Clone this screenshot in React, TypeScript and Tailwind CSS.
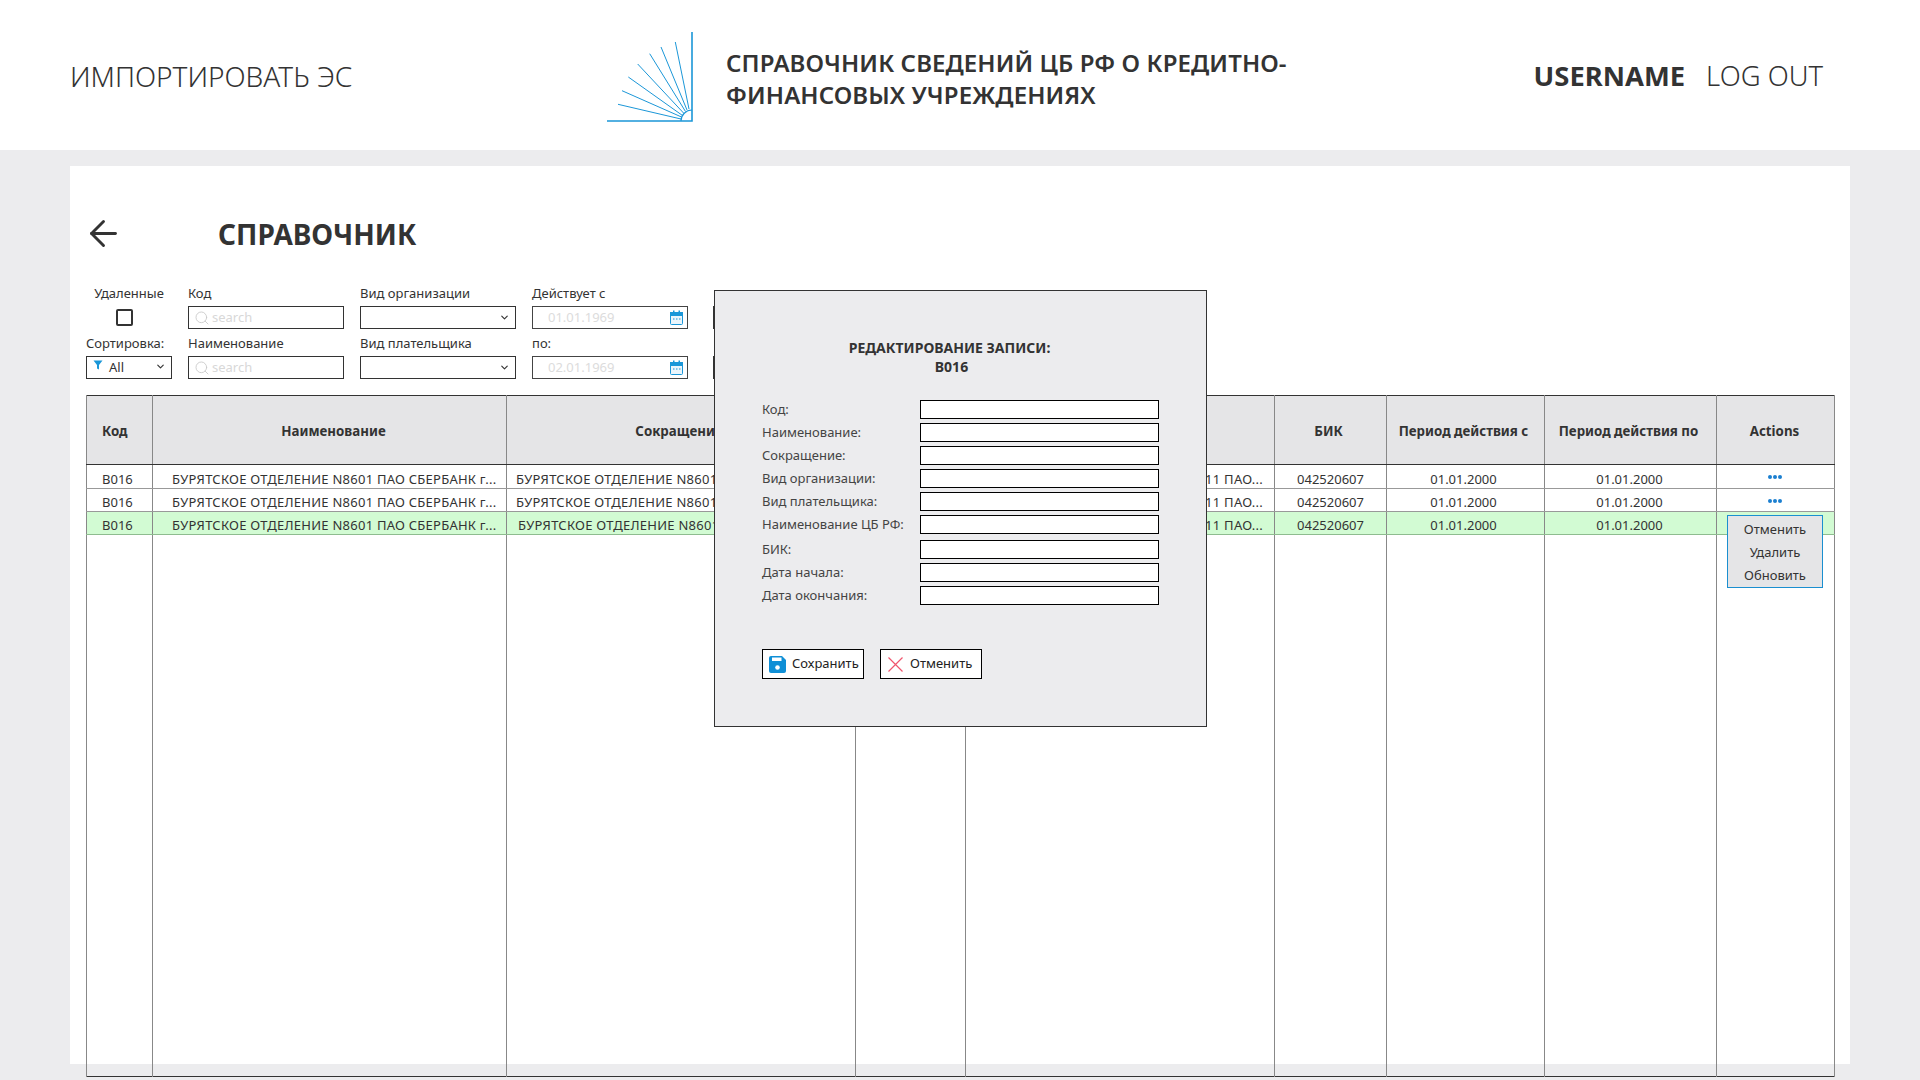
import React from "react";
import { Search, ChevronDown, ArrowLeft } from "lucide-react";

const widths = [66, 354, 349, 110, 309, 112, 158, 172, 118];
const headers = ["Код", "Наименование", "Сокращение", "Вид", "Наименование ЦБ РФ", "БИК", "Период действия с", "Период действия по", "Actions"];
const NAME = "БУРЯТСКОЕ ОТДЕЛЕНИЕ N8601 ПАО СБЕРБАНК г...";
const SHORT = "БУРЯТСКОЕ ОТДЕЛЕНИЕ N8611 ПАО...";
const formFields = ["Код:", "Наименование:", "Сокращение:", "Вид организации:", "Вид плательщика:", "Наименование ЦБ РФ:", "БИК:", "Дата начала:", "Дата окончания:"];

function Logo() {
  const rays = [
    [618, 104.3, 681, 119],
    [622, 90.7, 681.5, 117],
    [628.3, 77, 682.5, 115.5],
    [637.7, 64, 684, 113.5],
    [649.7, 53.7, 685.5, 111.5],
    [661, 47, 687, 110],
    [675.3, 42, 689, 109],
  ];
  return (
    <svg width="88" height="94" viewBox="606 30 88 94" className="shrink-0 mt-[4px]">
      {rays.map((r, i) => (
        <line key={i} x1={r[0]} y1={r[1]} x2={r[2]} y2={r[3]} stroke="#1b97d8" strokeWidth="1" />
      ))}
      <path d="M681 121a11 11 0 0 1 11-11" fill="none" stroke="#1b97d8" strokeWidth="1.2" />
      <path d="M607 121H692V32" fill="none" stroke="#1b97d8" strokeWidth="1.6" />
    </svg>
  );
}

function Calendar() {
  return (
    <svg width="13" height="15" viewBox="0 0 13 15" className="mr-[-1px]">
      <rect x="0.5" y="2.5" width="12" height="12" rx="1" fill="#eaf5fb" stroke="#1b97d8" />
      <rect x="0" y="2" width="13" height="4" fill="#1b97d8" />
      <rect x="3" y="0.5" width="1.5" height="2" fill="#1b97d8" />
      <rect x="8.5" y="0.5" width="1.5" height="2" fill="#1b97d8" />
      <path d="M3 9h1.5M6 9h1.5M9 9h1.5" stroke="#1b97d8" />
    </svg>
  );
}

function Label({ children, className = "" }: { children: React.ReactNode; className?: string }) {
  return <div className={`h-[18px] text-[13px] leading-[16px] text-[#333] whitespace-nowrap ${className}`}>{children}</div>;
}

function SearchField({ label }: { label: string }) {
  return (
    <div className="w-[156px]">
      <Label>{label}</Label>
      <div className="mt-[3px] h-[23px] border border-[#333] bg-white flex items-center pl-[5px] gap-[2px]">
        <Search size={16} strokeWidth={1.3} className="text-[#c8c8c8]" />
        <span className="text-[13px] text-[#d8d8d8]">search</span>
      </div>
    </div>
  );
}

function SelectField({ label }: { label: string }) {
  return (
    <div className="w-[156px]">
      <Label>{label}</Label>
      <div className="mt-[3px] h-[23px] border border-[#333] bg-white flex items-center justify-end pr-[5px]">
        <ChevronDown size={11} strokeWidth={2.5} className="text-[#333]" />
      </div>
    </div>
  );
}

function DateField({ label, value }: { label: string; value: string }) {
  return (
    <div className="w-[156px]">
      <Label>{label}</Label>
      <div className="mt-[3px] h-[23px] border border-[#444] bg-white flex items-center justify-between pl-[15px] pr-[5px]">
        <span className="text-[13px] text-[#dcdcdc]">{value}</span>
        <Calendar />
      </div>
    </div>
  );
}

function Row({ selected, dots, first }: { selected?: boolean; dots?: boolean; first?: boolean }) {
  const border = selected ? "border-y-[#8ebc8f]" : "border-y-[#999]";
  const cell = `border-x border-x-[#888] border-y ${border} p-0 ${first ? "pt-[4px]" : "pt-[3px]"} text-[13px] leading-[18px] text-[#333] whitespace-nowrap overflow-hidden`;
  const rowHeight = first ? "h-[24px]" : "h-[23px]";
  return (
    <tr className={selected ? `${rowHeight} bg-[#d2fbd3]` : rowHeight}>
      <td className={`${cell} pl-[15px]`}>В016</td>
      <td className={`${cell} pl-[19px] tracking-[0.25px]`}>{NAME}</td>
      <td className={`${cell} tracking-[0.25px] ${selected ? "pl-[11px]" : "pl-[9px]"}`}>{NAME}</td>
      <td className={cell} />
      <td className={`${cell} tracking-[0.25px] text-right pr-[11px]`}>{SHORT}</td>
      <td className={`${cell} text-center`}>042520607</td>
      <td className={`${cell} text-center pr-[4px]`}>01.01.2000</td>
      <td className={`${cell} text-center pr-[2px]`}>01.01.2000</td>
      <td className={`${cell} text-center`}>
        {dots && (
          <div className={`flex justify-center gap-[1px] pr-[2px] ${first ? "-mt-[3px]" : "-mt-[2px]"}`}>
            <span className="size-[4px] rounded-full bg-[#1b7fd0]" />
            <span className="size-[4px] rounded-full bg-[#1b7fd0]" />
            <span className="size-[4px] rounded-full bg-[#1b7fd0]" />
          </div>
        )}
      </td>
    </tr>
  );
}

export default function App() {
  return (
    <div
      className="relative h-[1080px] w-[1920px] overflow-hidden bg-[#ececee]"
      style={{ fontFamily: '"Noto Sans", sans-serif' }}
    >
      <header className="h-[150px] bg-white flex items-center pl-[70px] pr-[97px] text-[#333]">
        <div className="w-[537px] mt-[2px] text-[28px] font-light whitespace-nowrap">ИМПОРТИРОВАТЬ ЭС</div>
        <Logo />
        <div className="ml-[32px] mt-[7px] w-[809px] text-[24px] leading-[32px] font-semibold tracking-[0.1px]">
          СПРАВОЧНИК СВЕДЕНИЙ ЦБ РФ О КРЕДИТНО-
          <br />
          ФИНАНСОВЫХ УЧРЕЖДЕНИЯХ
        </div>
        <div className="mt-[2px] text-[27.4px] font-bold">USERNAME</div>
        <div className="ml-[21px] mt-[2px] text-[27.4px] font-light whitespace-nowrap">LOG OUT</div>
      </header>

      <main className="mt-[16px] ml-[70px] w-[1780px] h-[898px] bg-white pl-[16px] pr-[16px]">
        <div className="flex items-center pt-[21px] h-[113px]">
          <ArrowLeft size={41} strokeWidth={1.7} className="text-[#333] shrink-0 ml-[-3px]" />
          <h1 className="ml-[94px] mt-[2px] text-[28px] font-bold text-[#333]">СПРАВОЧНИК</h1>
        </div>

        <div className="flex mt-[6px] gap-[16px]">
          <div className="w-[86px]">
            <Label className="text-center">Удаленные</Label>
            <div className="h-[26px] flex items-center justify-center">
              <div className="size-[17px] rounded-[2px] border-2 border-[#333] mt-[3px] mr-[9px]" />
            </div>
            <Label className="mt-[6px]">Сортировка:</Label>
            <div className="mt-[3px] h-[23px] border border-[#333] bg-white flex items-center pl-[6px] pr-[5px] text-[13px] text-[#333]">
              <svg width="10" height="10" viewBox="0 0 10 10" className="mt-[-5px]">
                <path d="M0.5 0.5H9.5L6 5V9.5L4 8.5V5Z" fill="#1b97d8" />
              </svg>
              <span className="ml-[6px]">All</span>
              <ChevronDown size={11} strokeWidth={2.5} className="ml-auto mt-[-3px]" />
            </div>
          </div>
          <div className="flex flex-col gap-[6px]">
            <SearchField label="Код" />
            <SearchField label="Наименование" />
          </div>
          <div className="flex flex-col gap-[6px]">
            <SelectField label="Вид организации" />
            <SelectField label="Вид плательщика" />
          </div>
          <div className="flex flex-col gap-[6px]">
            <DateField label="Действует с" value="01.01.1969" />
            <DateField label="по:" value="02.01.1969" />
          </div>
          <div className="flex flex-col gap-[6px] ml-[9px]">
            <SelectField label="" />
            <SelectField label="" />
          </div>
        </div>

        <table className="mt-[16px] w-[1748px] h-[682px] table-fixed border-collapse border border-[#333]">
          <colgroup>
            {widths.map((w, i) => (
              <col key={i} style={{ width: w }} />
            ))}
          </colgroup>
          <thead>
            <tr className="h-[69px] bg-[#e5e5e7]">
              {headers.map((h, i) => (
                <th
                  key={h}
                  className={`border-x border-x-[#888] border-b border-b-[#333] pt-[4px] text-[13.3px] font-bold text-[#333] whitespace-nowrap overflow-hidden ${
                    i === 0 ? "pl-[15px] text-left" : i === 1 ? "pl-[8px]" : i === 8 ? "pr-[2px]" : "pr-[4px]"
                  }`}
                >
                  {h}
                </th>
              ))}
            </tr>
          </thead>
          <tbody>
            <Row dots first />
            <Row dots />
            <Row selected />
            <tr>
              {widths.map((_, i) => (
                <td key={i} className="border-x border-x-[#888] p-0" />
              ))}
            </tr>
          </tbody>
        </table>
      </main>

      {/* row menu */}
      <div className="absolute left-[1727px] top-[515px] w-[96px] h-[73px] border border-[#1b8fd0] bg-[#e5e5e7] flex flex-col items-center justify-center gap-[3px] text-[13px] leading-[20px] text-[#333]">
        <div>Отменить</div>
        <div>Удалить</div>
        <div>Обновить</div>
      </div>

      {/* edit dialog */}
      <div className="absolute left-[714px] top-[290px] w-[493px] h-[437px] border border-[#333] bg-[#ececee] pl-[47px]">
        <div className="mt-[47px] ml-[-47px] pl-[2px] pr-[24px] text-center text-[14px] leading-[19px] font-bold text-[#333]">
          <div>РЕДАКТИРОВАНИЕ ЗАПИСИ:</div>
          <div className="pl-[4px]">В016</div>
        </div>
        <div className="mt-[24px] flex flex-col gap-[4px]">
          {formFields.map((f) => (
            <div key={f} className={`flex items-center h-[19px] text-[13px] text-[#444] ${f === "БИК:" ? "mt-[2px]" : ""}`}>
              <div className="w-[158px] whitespace-nowrap">{f}</div>
              <div className="w-[239px] h-[19px] border border-black bg-white" />
            </div>
          ))}
        </div>
        <div className="mt-[44px] flex gap-[16px] text-[13px] text-[#222]">
          <button className="w-[102px] h-[30px] border border-black bg-white flex items-center pl-[6px] gap-[6px]">
            <svg width="17" height="17" viewBox="0 0 17 17">
              <path d="M0 2a2 2 0 0 1 2-2h11l4 4v11a2 2 0 0 1-2 2H2a2 2 0 0 1-2-2Z" fill="#0f8fd6" />
              <rect x="3" y="1.5" width="9.5" height="3.5" fill="#fff" />
              <circle cx="8.5" cy="11.5" r="2.3" fill="#fff" />
            </svg>
            Сохранить
          </button>
          <button className="w-[102px] h-[30px] border border-black bg-white flex items-center pl-[7px] gap-[7px]">
            <svg width="15" height="15" viewBox="0 0 15 15">
              <path d="M0.5 0.5L14.5 14.5M14.5 0.5L0.5 14.5" stroke="#f0556d" strokeWidth="1.2" />
            </svg>
            Отменить
          </button>
        </div>
      </div>
    </div>
  );
}
